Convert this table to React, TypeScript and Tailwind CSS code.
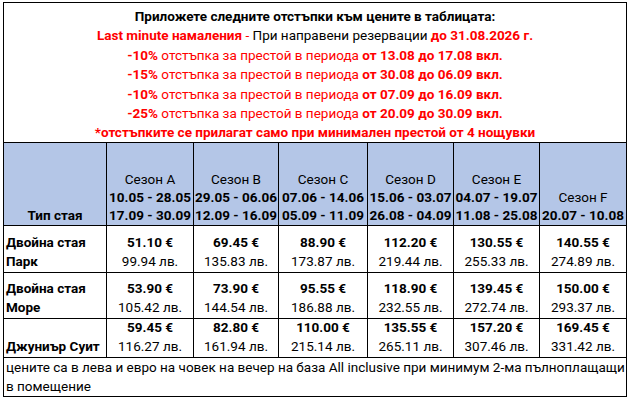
import React from "react";

const seasons = [
  { name: "Сезон A", d: ["10.05 - 28.05", "17.09 - 30.09"] },
  { name: "Сезон B", d: ["29.05 - 06.06", "12.09 - 16.09"] },
  { name: "Сезон C", d: ["07.06 - 14.06", "05.09 - 11.09"] },
  { name: "Сезон D", d: ["15.06 - 03.07", "26.08 - 04.09"] },
  { name: "Сезон E", d: ["04.07 - 19.07", "11.08 - 25.08"] },
  { name: "Сезон F", d: ["20.07 - 10.08"] },
];

const rows = [
  {
    l1: "Двойна стая",
    l2: "Парк",
    h: "h-[46px]",
    p: [
      ["51.10 €", "99.94 лв."],
      ["69.45 €", "135.83 лв."],
      ["88.90 €", "173.87 лв."],
      ["112.20 €", "219.44 лв."],
      ["130.55 €", "255.33 лв."],
      ["140.55 €", "274.89 лв."],
    ],
  },
  {
    l1: "Двойна стая",
    l2: "Море",
    h: "h-[45px]",
    p: [
      ["53.90 €", "105.42 лв."],
      ["73.90 €", "144.54 лв."],
      ["95.55 €", "186.88 лв."],
      ["118.90 €", "232.55 лв."],
      ["139.45 €", "272.74 лв."],
      ["150.00 €", "293.37 лв."],
    ],
  },
  {
    l1: "",
    l2: "Джуниър Суит",
    h: "h-[38px]",
    p: [
      ["59.45 €", "116.27 лв."],
      ["82.80 €", "161.94 лв."],
      ["110.00 €", "215.14 лв."],
      ["135.55 €", "265.11 лв."],
      ["157.20 €", "307.46 лв."],
      ["169.45 €", "331.42 лв."],
    ],
  },
];

const discounts = [
  ["-10%", "от 13.08 до 17.08 вкл."],
  ["-15%", "от 30.08 до 06.09 вкл."],
  ["-10%", "от 07.09 до 16.09 вкл."],
  ["-25%", "от 20.09 до 30.09 вкл."],
];

export default function App() {
  return (
    <div className="w-[629px] h-[400px] bg-white pt-[2px] pl-[3px] font-['Roboto',sans-serif] text-[13.5px] text-black">
      <div className="w-[624px] border border-black">
        <div className="grid grid-cols-[102px_86px_84px_88px_85px_85px_86px] gap-px bg-black">
          <div className="col-span-7 h-[139px] bg-white pt-[4px] text-center leading-[19.4px]">
            <div className="font-bold">Приложете следните отстъпки към цените в таблицата:</div>
            <div>
              <span className="font-bold text-[#ff0000]">Last minute намаления</span>
              <span className="text-[#ff0000]"> - </span>
              <span>При направени резервации </span>
              <span className="font-bold text-[#ff0000]">до 31.08.2026 г.</span>
            </div>
            {discounts.map(([pct, dates], i) => (
              <div key={i} className="text-[#ff0000]">
                <span className="font-bold">{pct}</span> отстъпка за престой в периода{" "}
                <span className="font-bold">{dates}</span>
              </div>
            ))}
            <div className="font-bold text-[#ff0000]">
              *отстъпките се прилагат само при минимален престой от 4 нощувки
            </div>
          </div>

          <div className="h-[82px] bg-[#b4c6e7] flex flex-col justify-end items-center leading-[18px] pb-[1px] font-bold">
            Тип стая
          </div>
          {seasons.map((s) => (
            <div
              key={s.name}
              className="h-[82px] bg-[#b4c6e7] flex flex-col justify-end items-center leading-[18px] pb-[1px] whitespace-nowrap"
            >
              <div>{s.name}</div>
              {s.d.map((d) => (
                <div key={d} className="font-bold">
                  {d}
                </div>
              ))}
            </div>
          ))}

          {rows.map((r, ri) => (
            <React.Fragment key={ri}>
              <div className={`${r.h} bg-white flex flex-col justify-end pl-[2px] pb-[1px] leading-[19px] font-bold whitespace-nowrap`}>
                {r.l1 && <div>{r.l1}</div>}
                <div>{r.l2}</div>
              </div>
              {r.p.map(([eur, lv], ci) => (
                <div
                  key={ci}
                  className={`${r.h} bg-white flex flex-col justify-end items-center pb-[1px] leading-[19px] whitespace-nowrap`}
                >
                  <div className="font-bold">{eur}</div>
                  <div>{lv}</div>
                </div>
              ))}
            </React.Fragment>
          ))}

          <div className="col-span-7 h-[38px] bg-white pl-[2px] leading-[19px] flex flex-col justify-end pb-[0px]">
            <div>цените са в лева и евро на човек на вечер на база All inclusive при минимум 2-ма пълноплащащи</div>
            <div>в помещение</div>
          </div>
        </div>
      </div>
    </div>
  );
}
